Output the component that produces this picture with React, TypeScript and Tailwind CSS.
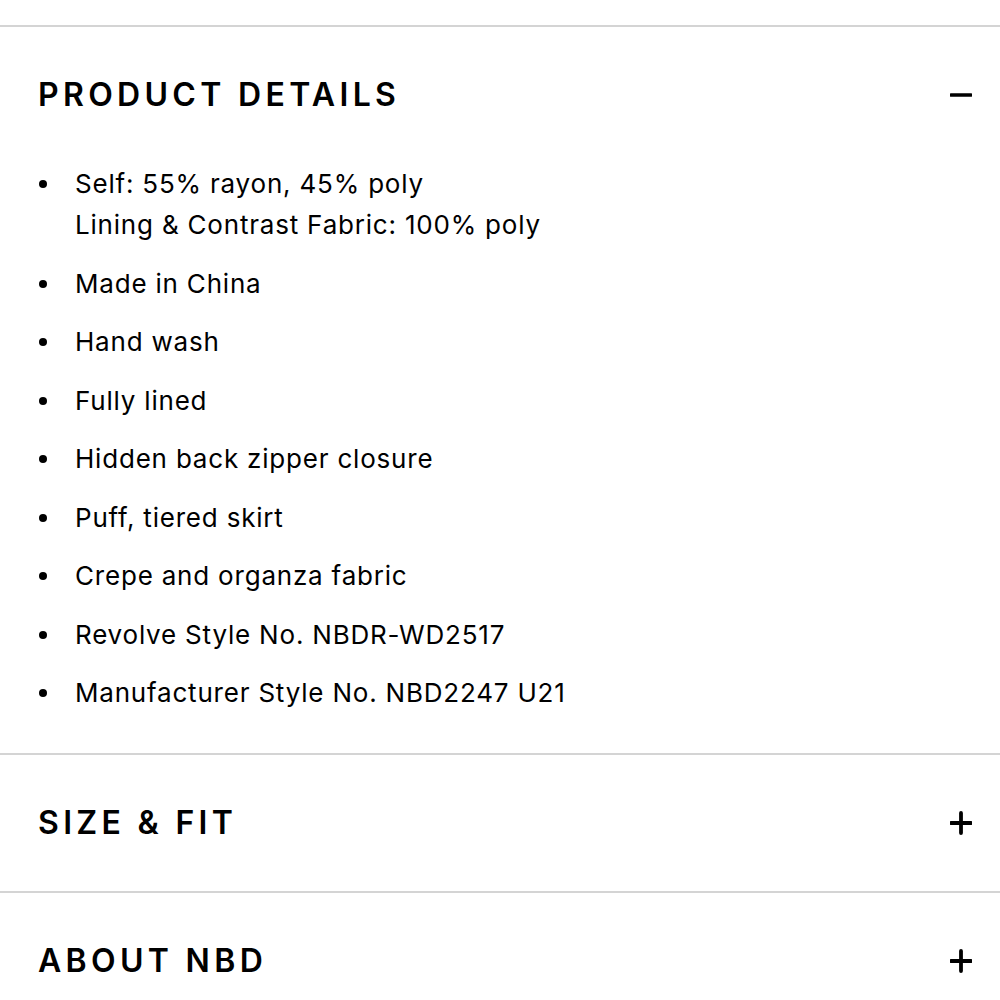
const details: string[][] = [
  ["Self: 55% rayon, 45% poly", "Lining & Contrast Fabric: 100% poly"],
  ["Made in China"],
  ["Hand wash"],
  ["Fully lined"],
  ["Hidden back zipper closure"],
  ["Puff, tiered skirt"],
  ["Crepe and organza fabric"],
  ["Revolve Style No. NBDR-WD2517"],
  ["Manufacturer Style No. NBD2247 U21"],
];

function Minus() {
  return (
    <svg width="22" height="22" viewBox="0 0 22 22" className="shrink-0">
      <path d="M1 11h20" stroke="#000" strokeWidth="3.6" strokeLinecap="round" />
    </svg>
  );
}

function Plus() {
  return (
    <svg width="22" height="24" viewBox="0 0 22 24" className="shrink-0">
      <path d="M1 12h20M11 2v20" stroke="#000" strokeWidth="3.8" strokeLinecap="round" />
    </svg>
  );
}

function SectionHeader({ title, open }: { title: string; open?: boolean }) {
  return (
    <button className="w-full h-[136px] flex items-center justify-between pl-[38px] pr-[28px] text-left">
      <span className="text-[32px] font-semibold tracking-[0.135em] text-black leading-none">{title}</span>
      {open ? <Minus /> : <Plus />}
    </button>
  );
}

export default function App() {
  return (
    <div
      className="w-[1000px] h-[1000px] bg-white overflow-hidden pt-[25px] text-black"
      style={{ fontFamily: "Inter, 'Noto Sans', sans-serif" }}
    >
      {/* Product details (open) */}
      <section className="border-t-2 border-[#d4d4d4]">
        <SectionHeader title="PRODUCT DETAILS" open />
        <ul className="pb-[40px] flex flex-col gap-[17.5px]">
          {details.map((lines, i) => (
            <li key={i} className="flex text-[26px] leading-[41px] tracking-[0.8px]">
              <span className="w-[75px] shrink-0 flex justify-start pl-[39px] pt-[17px]">
                <span className="w-[8px] h-[8px] rounded-full bg-black" />
              </span>
              <span className="flex flex-col">
                {lines.map((l) => (
                  <span key={l}>{l}</span>
                ))}
              </span>
            </li>
          ))}
        </ul>
      </section>

      <section className="border-t-2 border-[#d4d4d4]">
        <SectionHeader title="SIZE & FIT" />
      </section>

      <section className="border-t-2 border-[#d4d4d4]">
        <SectionHeader title="ABOUT NBD" />
      </section>
    </div>
  );
}
